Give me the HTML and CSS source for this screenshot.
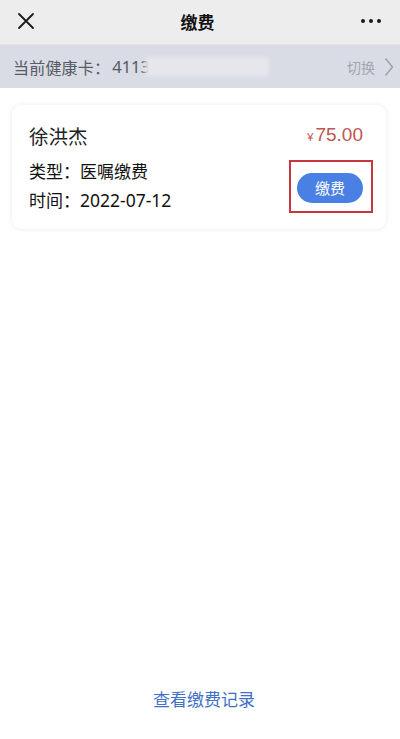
FILE: index.html
```html
<!DOCTYPE html>
<html lang="zh-CN">
<head>
<meta charset="utf-8">
<title>缴费</title>
<link rel="stylesheet" href="styles.css">
</head>
<body>
<div class="page">
  <header class="nav">
    <svg class="nav-close" width="18" height="18" viewBox="0 0 18 18"><path d="M2 2L16 16M16 2L2 16" stroke="#1a1a1a" stroke-width="1.8" stroke-linecap="round"/></svg>
    <div class="nav-title">缴费</div>
    <svg class="nav-more" width="22" height="6" viewBox="0 0 22 6"><circle cx="3" cy="3" r="2" fill="#1a1a1a"/><circle cx="11" cy="3" r="2" fill="#1a1a1a"/><circle cx="19" cy="3" r="2" fill="#1a1a1a"/></svg>
  </header>
  <div class="cardbar">
    <span class="cardbar-label">当前健康卡：</span><span class="cardbar-num">4113</span><span class="cardbar-blur"></span>
    <span class="cardbar-switch">切换</span>
    <svg class="cardbar-arrow" width="10" height="20" viewBox="0 0 10 20"><path d="M1.5 1.5L8.5 10L1.5 18.5" fill="none" stroke="#9a9ea8" stroke-width="1.4"/></svg>
  </div>
  <main class="content">
    <div class="bill">
      <div class="bill-top">
        <div class="bill-name">徐洪杰</div>
        <div class="bill-price"><span class="yen">¥</span>75.00</div>
      </div>
      <div class="bill-bottom">
        <div class="bill-info">
          <div class="bill-row">类型：医嘱缴费</div>
          <div class="bill-row">时间：<span class="num">2022-07-12</span></div>
        </div>
        <div class="pay-wrap">
          <button class="pay-btn">缴费</button>
          <span class="mark"></span>
        </div>
      </div>
    </div>
  </main>
  <footer class="records">查看缴费记录</footer>
</div>
</body>
</html>
```
FILE: styles.css
```css
* { box-sizing: border-box; }
html, body { margin: 0; padding: 0; }
body {
  background: #ffffff;
  font-family: "Noto Sans", "Noto Sans CJK SC", sans-serif;
  color: #1a1a1a;
}
.page {
  width: 400px;
  height: 739px;
  display: flex;
  flex-direction: column;
  overflow: hidden;
}
.nav {
  height: 45px;
  background: #ededed;
  display: flex;
  align-items: center;
  justify-content: space-between;
  padding: 0 18px 2px 17px;
  border-bottom: 1px solid #e2e2e4;
}
.nav-close { display: block; }
.nav-title {
  font-size: 17px;
  font-weight: 700;
  color: #111;
  font-family: "Noto Sans CJK SC", sans-serif;
}
.nav-more { display: block; }
.cardbar {
  height: 43px;
  background: #d9dce4;
  display: flex;
  align-items: center;
  padding: 0 6px 0 13px;
  font-size: 16px;
  color: #555a63;
}
.cardbar-label { font-family: "Noto Sans CJK SC", sans-serif; letter-spacing: 0.2px; }
.cardbar-num { font-family: "Noto Sans", sans-serif; font-size: 16.5px; margin-left: 2px; }
.cardbar-blur {
  width: 124px;
  height: 19px;
  margin-left: -5px;
  background: #e5e7ed;
  border-radius: 3px;
  filter: blur(2px);
}
.cardbar-switch {
  margin-left: auto;
  font-size: 14px;
  color: #a3a6ae;
  margin-right: 9px;
}
.cardbar-arrow { display: block; }
.content {
  flex: 1;
  padding: 17px 14px 0 12px;
}
.bill {
  background: #fff;
  border-radius: 9px;
  box-shadow: 0 0 5px rgba(0, 0, 0, 0.09);
  padding: 18px 23px 14px 17px;
}
.bill-top {
  display: flex;
  justify-content: space-between;
  align-items: center;
  height: 24px;
}
.bill-name {
  font-size: 19.5px;
  color: #222;
  font-family: "Noto Sans CJK SC", sans-serif;
}
.bill-price {
  font-size: 19px;
  color: #c0564e;
  font-family: "Liberation Sans", sans-serif;
}
.yen { font-size: 11px; margin-right: 2px; }
.bill-bottom {
  display: flex;
  justify-content: space-between;
  align-items: center;
  margin-top: 11px;
}
.bill-row {
  font-size: 17px;
  line-height: 28px;
  color: #111;
}
.gap { margin-left: 3px; }
.num { font-family: "Noto Sans", sans-serif; font-size: 17.5px; }
.pay-wrap { position: relative; margin-top: 2px; }
.pay-btn {
  display: block;
  width: 66px;
  height: 30px;
  border: 0;
  border-radius: 15px;
  background: #4a80e4;
  color: #fff;
  font-size: 15px;
  font-family: "Noto Sans CJK SC", sans-serif;
  padding: 0;
}
.mark {
  position: absolute;
  left: -8px;
  right: -10px;
  top: -13px;
  bottom: -10px;
  border: 2px solid #c8363e;
}
.records {
  text-align: center;
  font-size: 17px;
  color: #3f70c4;
  padding: 0 0 26px 8px;
  line-height: 26px;
}
```
